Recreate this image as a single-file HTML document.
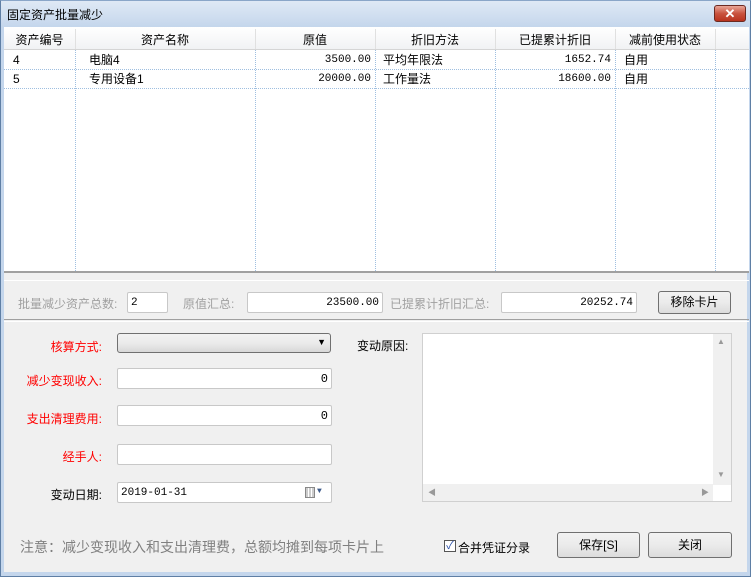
<!DOCTYPE html>
<html><head><meta charset="utf-8"><style>
*{margin:0;padding:0;box-sizing:border-box}
body{width:751px;height:577px;overflow:hidden;background:#f0f0f0;font-family:"Liberation Sans","Noto Sans CJK SC","WenQuanYi Zen Hei",sans-serif;font-size:12px;color:#000;position:relative}
.a{position:absolute}
.frame{left:0;top:0;width:751px;height:577px;border:1px solid #5f7fa5;border-top-color:#8aa6c8}
.title{left:1px;top:1px;width:749px;height:26px;background:linear-gradient(#dfe9f5,#c4d6ec);}
.tt{left:7px;top:6px;font-size:12px}
.close{left:714px;top:5px;width:32px;height:17px;border:1px solid #6b2a22;border-radius:3px;background:linear-gradient(#e9a698,#c9533f 50%,#b8331f);color:#fff;font-weight:bold;text-align:center;line-height:15px;font-size:13px}
.sideL{left:1px;top:27px;width:3px;height:548px;background:#c4d6ec}
.sideR{left:747px;top:27px;width:3px;height:548px;background:#c4d6ec}
.bot{left:1px;top:572px;width:749px;height:4px;background:#c4d6ec}
.grid{left:4px;top:27px;width:745px;height:246px;background:#fff;border-bottom:2px solid #a0a0a0}
.hdr{left:4px;top:27px;width:745px;height:23px;background:linear-gradient(#fff,#f1f2f4);border-bottom:1px solid #d5d5d5}
.hc{top:31px;text-align:center;font-size:12px}
.vl{top:50px;width:0;height:221px;border-left:1px dotted #9fbfe0}
.hl{left:4px;width:745px;height:0;border-top:1px dotted #9fbfe0}
.cell{font-size:12px;height:19px;line-height:19px}
.num{text-align:right;font-family:"Liberation Mono",monospace;font-size:11px;width:116px}
.lbl{color:#a0a0a0}
.inp{background:#fff;border:1px solid #c8c8c8;border-radius:2px;height:21px;font-size:11px;padding:0 3px;display:flex;align-items:center;justify-content:flex-end;font-family:"Liberation Mono","Noto Sans CJK SC",monospace}
.btn{border:1px solid #707070;border-radius:3px;background:linear-gradient(#f2f2f2,#ebebeb 50%,#dcdcdc);text-align:center;font-size:12px}
.red{color:#f00;text-align:right;width:100px}
</style></head><body>
<div class="a frame"></div>
<div class="a title"></div>
<div class="a tt">固定资产批量减少</div>
<div class="a close">✕</div>
<div class="a sideL"></div><div class="a sideR"></div><div class="a bot"></div>

<div class="a grid"></div>
<div class="a hdr"></div>
<div class="a hc" style="left:4px;width:71px">资产编号</div>
<div class="a hc" style="left:75px;width:180px">资产名称</div>
<div class="a hc" style="left:255px;width:120px">原值</div>
<div class="a hc" style="left:375px;width:120px">折旧方法</div>
<div class="a hc" style="left:495px;width:120px">已提累计折旧</div>
<div class="a hc" style="left:615px;width:100px">减前使用状态</div>
<div class="a" style="left:75px;top:29px;height:20px;border-left:1px solid #e0e0e0"></div>
<div class="a" style="left:255px;top:29px;height:20px;border-left:1px solid #e0e0e0"></div>
<div class="a" style="left:375px;top:29px;height:20px;border-left:1px solid #e0e0e0"></div>
<div class="a" style="left:495px;top:29px;height:20px;border-left:1px solid #e0e0e0"></div>
<div class="a" style="left:615px;top:29px;height:20px;border-left:1px solid #e0e0e0"></div>
<div class="a" style="left:715px;top:29px;height:20px;border-left:1px solid #e0e0e0"></div>
<div class="a vl" style="left:75px"></div><div class="a vl" style="left:255px"></div><div class="a vl" style="left:375px"></div>
<div class="a vl" style="left:495px"></div><div class="a vl" style="left:615px"></div><div class="a vl" style="left:715px"></div>
<div class="a hl" style="top:69px"></div><div class="a hl" style="top:88px"></div>
<div class="a cell" style="left:13px;top:51px">4</div>
<div class="a cell" style="left:89px;top:51px">电脑4</div>
<div class="a cell num" style="left:255px;top:51px">3500.00</div>
<div class="a cell" style="left:383px;top:51px">平均年限法</div>
<div class="a cell num" style="left:495px;top:51px">1652.74</div>
<div class="a cell" style="left:624px;top:51px">自用</div>
<div class="a cell" style="left:13px;top:70px">5</div>
<div class="a cell" style="left:89px;top:70px">专用设备1</div>
<div class="a cell num" style="left:255px;top:70px">20000.00</div>
<div class="a cell" style="left:383px;top:70px">工作量法</div>
<div class="a cell num" style="left:495px;top:70px">18600.00</div>
<div class="a cell" style="left:624px;top:70px">自用</div>

<div class="a" style="left:4px;top:280px;width:745px;height:40px;border-top:1px solid #fff;border-bottom:1px solid #a0a0a0"></div>
<div class="a" style="left:4px;top:321px;width:745px;height:0;border-top:1px solid #fff"></div>
<div class="a lbl" style="left:18px;top:295px">批量减少资产总数:</div>
<div class="a inp" style="left:127px;top:292px;width:41px;justify-content:flex-start">2</div>
<div class="a lbl" style="left:183px;top:295px">原值汇总:</div>
<div class="a inp" style="left:247px;top:292px;width:136px">23500.00</div>
<div class="a lbl" style="left:390px;top:295px">已提累计折旧汇总:</div>
<div class="a inp" style="left:501px;top:292px;width:136px">20252.74</div>
<div class="a btn" style="left:658px;top:291px;width:73px;height:23px;line-height:21px">移除卡片</div>

<div class="a red" style="left:2px;top:338px">核算方式:</div>
<div class="a" style="left:117px;top:333px;width:214px;height:20px;border:1px solid #707070;border-radius:3px;background:linear-gradient(#f2f2f2,#ebebeb 50%,#d8d8d8)"><span class="a" style="right:4px;top:3px;font-size:9px">▼</span></div>
<div class="a red" style="left:2px;top:372px">减少变现收入:</div>
<div class="a inp" style="left:117px;top:368px;width:215px;font-size:12px">0</div>
<div class="a red" style="left:2px;top:410px">支出清理费用:</div>
<div class="a inp" style="left:117px;top:405px;width:215px;font-size:12px">0</div>
<div class="a red" style="left:2px;top:448px">经手人:</div>
<div class="a inp" style="left:117px;top:444px;width:215px"></div>
<div class="a" style="left:2px;top:486px;width:100px;text-align:right">变动日期:</div>
<div class="a inp" style="left:117px;top:482px;width:215px;justify-content:flex-start;font-size:11px">2019-01-31<span class="a" style="left:187px;top:4px;width:10px;height:11px;border:1px solid #888;background:repeating-linear-gradient(90deg,#ccc 0 2px,#fff 2px 3px)"></span><span class="a" style="left:199px;top:4px;font-size:8px;color:#3d5a8a">▼</span></div>

<div class="a" style="left:357px;top:337px">变动原因:</div>
<div class="a" style="left:422px;top:333px;width:310px;height:169px;background:#fff;border:1px solid #d0d0d0"></div>
<div class="a" style="left:713px;top:334px;width:18px;height:151px;background:#f0f0f0"></div>
<div class="a" style="left:423px;top:484px;width:290px;height:17px;background:#f0f0f0"></div>
<div class="a" style="left:717px;top:337px;font-size:8px;color:#999">▲</div>
<div class="a" style="left:717px;top:470px;font-size:8px;color:#999">▼</div>
<div class="a" style="left:428px;top:487px;font-size:8px;color:#999">◀</div>
<div class="a" style="left:701px;top:487px;font-size:8px;color:#999">▶</div>

<div class="a" style="left:20px;top:537px;font-size:14px;color:#808080">注意：减少变现收入和支出清理费，总额均摊到每项卡片上</div>
<div class="a" style="left:444px;top:540px;width:12px;height:12px;border:1px solid #555;background:#fff;font-size:11px;line-height:10px;text-align:center;color:#2a4fa8">✓</div>
<div class="a" style="left:458px;top:539px">合并凭证分录</div>
<div class="a btn" style="left:557px;top:532px;width:83px;height:26px;line-height:24px">保存[S]</div>
<div class="a btn" style="left:648px;top:532px;width:84px;height:26px;line-height:24px">关闭</div>
</body></html>
